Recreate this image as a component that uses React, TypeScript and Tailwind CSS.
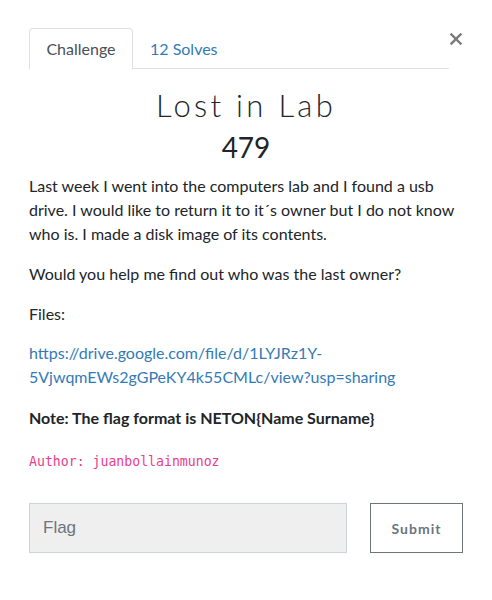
import React from "react";

export default function App() {
  return (
    <div
      className="w-[492px] h-[600px] bg-white pt-[28px] px-[29px] text-[#212529]"
      style={{ fontFamily: "Lato, 'Liberation Sans', sans-serif" }}
    >
      <div className="flex items-start">
        <ul className="flex w-[420px] border-b border-[#dee2e6] h-[41px]">
          <li className="-mb-px">
            <div className="h-[42px] w-[104px] flex items-center justify-center border border-[#dee2e6] border-b-white rounded-t-[4px] bg-white text-[16px] text-[#495057]">
              Challenge
            </div>
          </li>
          <li>
            <div className="h-[41px] flex items-center pl-[17px] text-[16px] text-[#337ab7]">
              12 Solves
            </div>
          </li>
        </ul>
        <button className="flex-1 flex justify-end pt-[5px] pr-[1px] text-[#777]">
          <svg width="12" height="12" viewBox="0 0 12 12">
            <path d="M1.5 1.5 L10.5 10.5 M10.5 1.5 L1.5 10.5" stroke="#7a7a7a" strokeWidth="2.4" strokeLinecap="square" />
          </svg>
        </button>
      </div>

      <h3 className="text-center mt-[18px] text-[31px] leading-[36px] font-light tracking-[3.3px] text-[#212529]">
        Lost in Lab
      </h3>
      <h4 className="text-center mt-[8px] text-[28px] leading-[32px] font-normal text-[#212529]">
        479
      </h4>

      <div className="mt-[11px] text-[16px] leading-[24px] w-[434px]">
        <p>
          Last week I went into the computers lab and I found a usb drive. I would like to return it to it´s owner but I do not know who is. I made a disk image of its contents.
        </p>
        <p className="mt-[16px]">Would you help me find out who was the last owner?</p>
        <p className="mt-[16px]">Files:</p>
        <p className="mt-[15px]">
          <a className="text-[#337ab7] break-all">
            https://drive.google.com/file/d/1LYJRz1Y-
            <br />
            5VjwqmEWs2gGPeKY4k55CMLc/view?usp=sharing
          </a>
        </p>
        <p className="mt-[17px] font-bold">Note: The flag format is NETON{"{"}Name Surname{"}"}</p>
        <p className="mt-[18px]">
          <code
            className="text-[13.2px] text-[#e83e8c]"
            style={{ fontFamily: "'DejaVu Sans Mono', 'Liberation Mono', monospace" }}
          >
            Author: juanbollainmunoz
          </code>
        </p>
      </div>

      <div className="mt-[29px] flex items-center gap-[23px]">
        <input
          placeholder="Flag"
          className="w-[318px] h-[50px] bg-[#efefef] border border-[#ced4da] px-[13px] text-[17px] placeholder:text-[#6c757d] outline-none"
          style={{ fontFamily: "'Liberation Sans', Arial, sans-serif" }}
        />
        <button className="w-[93px] h-[50px] border border-[#6c757d] bg-white text-[14px] font-bold tracking-[1px] text-[#6c757d]">
          Submit
        </button>
      </div>
    </div>
  );
}
